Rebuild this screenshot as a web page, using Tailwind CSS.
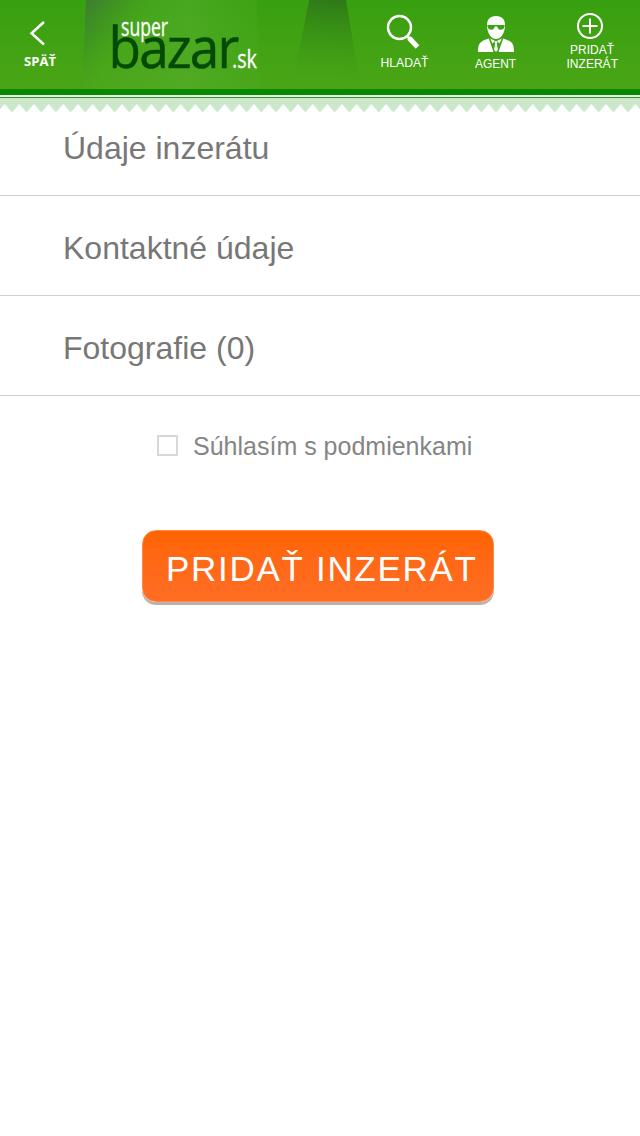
<!DOCTYPE html>
<html lang="sk">
<head>
<meta charset="utf-8">
<title>superbazar.sk</title>
<script src="https://cdn.jsdelivr.net/npm/@tailwindcss/browser@4"></script>
</head>
<body class="min-h-screen bg-white font-['Liberation_Sans',Arial,sans-serif] text-[#777]">
<header class="relative h-[89px] bg-linear-to-b from-[#37a010] to-[#4aa516]">
  <svg class="absolute inset-0" width="640" height="89" aria-hidden="true">
    <defs>
      <linearGradient id="a" x1="85" y1="0" x2="135" y2="40" gradientUnits="userSpaceOnUse"><stop stop-color="#3f7a34"/><stop offset=".45" stop-color="#3f8f24" stop-opacity=".65"/><stop offset="1" stop-color="#4aa51c" stop-opacity="0"/></linearGradient>
      <linearGradient id="b" x1="330" y1="0" x2="325" y2="85" gradientUnits="userSpaceOnUse"><stop stop-color="#2f7a18"/><stop offset=".5" stop-color="#399015" stop-opacity=".6"/><stop offset="1" stop-color="#46a216" stop-opacity="0"/></linearGradient>
      <linearGradient id="c" x1="80" y1="0" x2="260" y2="0" gradientUnits="userSpaceOnUse"><stop stop-color="#58b030" stop-opacity=".1"/><stop offset=".6" stop-color="#58b030" stop-opacity=".5"/><stop offset="1" stop-color="#4aa920" stop-opacity=".3"/></linearGradient>
    </defs>
    <path d="M86 0H257L261 89H82Z" fill="url(#c)"/>
    <path d="M86 0H257L261 89H82Z" fill="url(#a)"/>
    <path d="M309 0H346L361 89H292Z" fill="url(#b)"/>
  </svg>
  <nav class="relative flex h-full">
    <a class="w-[80px]">
      <svg width="80" height="89" fill="none"><path d="M44 22L31.500 33.200L44 44.500" stroke="#fff" stroke-width="2.500"/><text x="24" y="66" textLength="32" lengthAdjust="spacingAndGlyphs" fill="#fff" font-family="Open Sans" font-weight="700" font-size="12">SPÄŤ</text></svg>
    </a>
    <a class="w-[200px]">
      <svg width="200" height="89">
        <text transform="translate(28.500 68) scale(.95 1)" letter-spacing="-2" fill="#044a04" stroke="#044a04" stroke-width=".5" font-family="Open Sans" font-size="56">bazar</text>
        <text x="41" y="36" textLength="47" lengthAdjust="spacingAndGlyphs" fill="#fff" stroke="#fff" stroke-width=".3" font-family="Open Sans" font-size="26">super</text>
        <text x="152" y="68" textLength="25" lengthAdjust="spacingAndGlyphs" fill="#fff" stroke="#fff" stroke-width=".3" font-family="Open Sans" font-size="26">.sk</text>
      </svg>
    </a>
    <a class="ml-[80px] w-[90px]">
      <svg width="90" height="89" fill="none"><circle cx="39.500" cy="27.500" r="11.500" stroke="#fff" stroke-width="2.400"/><path d="M47 36L50 39" stroke="#fff" stroke-width="2.500"/><path d="M49 38L57.500 47" stroke="#fff" stroke-width="5"/><text x="20.500" y="67" textLength="48" lengthAdjust="spacingAndGlyphs" fill="#fff" font-family="Liberation Sans" font-size="12.500">HLADAŤ</text></svg>
    </a>
    <a class="w-[95px]">
      <svg width="95" height="89" fill="#fff"><path d="M46 16C52 16 55 19.500 55 25C55 33 51 39 46 39C41 39 37 33 37 25C37 19.500 40 16 46 16Z"/><path d="M37.300 25H54.700L54 28Q53 30 50.500 29.800Q47.800 29.500 47.200 26.500H44.800Q44.200 29.500 41.500 29.800Q39 30 38 28Z" fill="#3da111"/><path d="M28 52C28 43 30 41.500 38.800 38.500L43.500 52ZM64 52C64 43 62 41.500 53.200 38.500L48.500 52Z"/><path d="M40.300 38.500L45 41L42.500 43.500ZM51.700 38.500L47 41L49.500 43.500Z"/><path d="M44.500 41.200H47.500L46.800 44L48 49.500L46 52L44 49.500L45.200 44Z"/><text x="25" y="68" textLength="41" lengthAdjust="spacingAndGlyphs" font-family="Liberation Sans" font-size="12.500">AGENT</text></svg>
    </a>
    <a class="w-[95px]">
      <svg width="95" height="89" fill="none"><circle cx="45" cy="26" r="12" stroke="#fff" stroke-width="2"/><path d="M37.500 26H52.500M45 18.500V33.500" stroke="#fff" stroke-width="2"/><g fill="#fff" font-family="Liberation Sans" font-size="12.500"><text x="25" y="54" textLength="44" lengthAdjust="spacingAndGlyphs">PRIDAŤ</text><text x="21.500" y="68" textLength="51.500" lengthAdjust="spacingAndGlyphs">INZERÁT</text></g></svg>
    </a>
  </nav>
</header>
<div class="h-[6px] bg-[#078a00]"></div>
<div class="h-[2px] bg-[#e4f5e2]"></div>
<div class="h-px bg-[#3a8a38]"></div>
<svg class="block" width="640" height="15" aria-hidden="true">
  <defs><pattern id="z" x="4.600" width="14.670" height="15" patternUnits="userSpaceOnUse"><path d="M0 0H14.670V6L7.335 14.500L0 6Z" fill="#cce8cb"/></pattern></defs>
  <rect width="640" height="15" fill="url(#z)"/>
</svg>
<main>
  <section class="-mt-[13px] flex h-[96px] items-center border-b border-[#d0d0d0] pl-[63px]"><h2 class="text-[32px] leading-none">Údaje inzerátu</h2></section>
  <section class="flex h-[100px] items-center border-b border-[#d0d0d0] pl-[63px]"><h2 class="mt-[4px] text-[32px] leading-none">Kontaktné údaje</h2></section>
  <section class="flex h-[100px] items-center border-b border-[#d0d0d0] pl-[63px]"><h2 class="mt-[4px] text-[32px] leading-none">Fotografie (0)</h2></section>
  <label class="mt-[34px] ml-[157px] flex h-[32px] items-center gap-[15px] text-[25px] text-[#858585]">
    <span class="-mt-px size-[21px] border-2 border-[#d8d8d8] bg-white"></span><span class="mt-[2px]">Súhlasím s podmienkami</span>
  </label>
  <button class="mt-[68px] ml-[142px] flex h-[72px] w-[352px] items-center rounded-[14px] border border-[#ff8a45] bg-linear-to-b from-[#ff6400] to-[#ff6d24] pt-[7px] pl-[23px] text-[35px] tracking-[1.7px] whitespace-nowrap text-white shadow-[0_3px_0_#bdb3ae]">PRIDAŤ INZERÁT</button>
</main>
</body>
</html>
